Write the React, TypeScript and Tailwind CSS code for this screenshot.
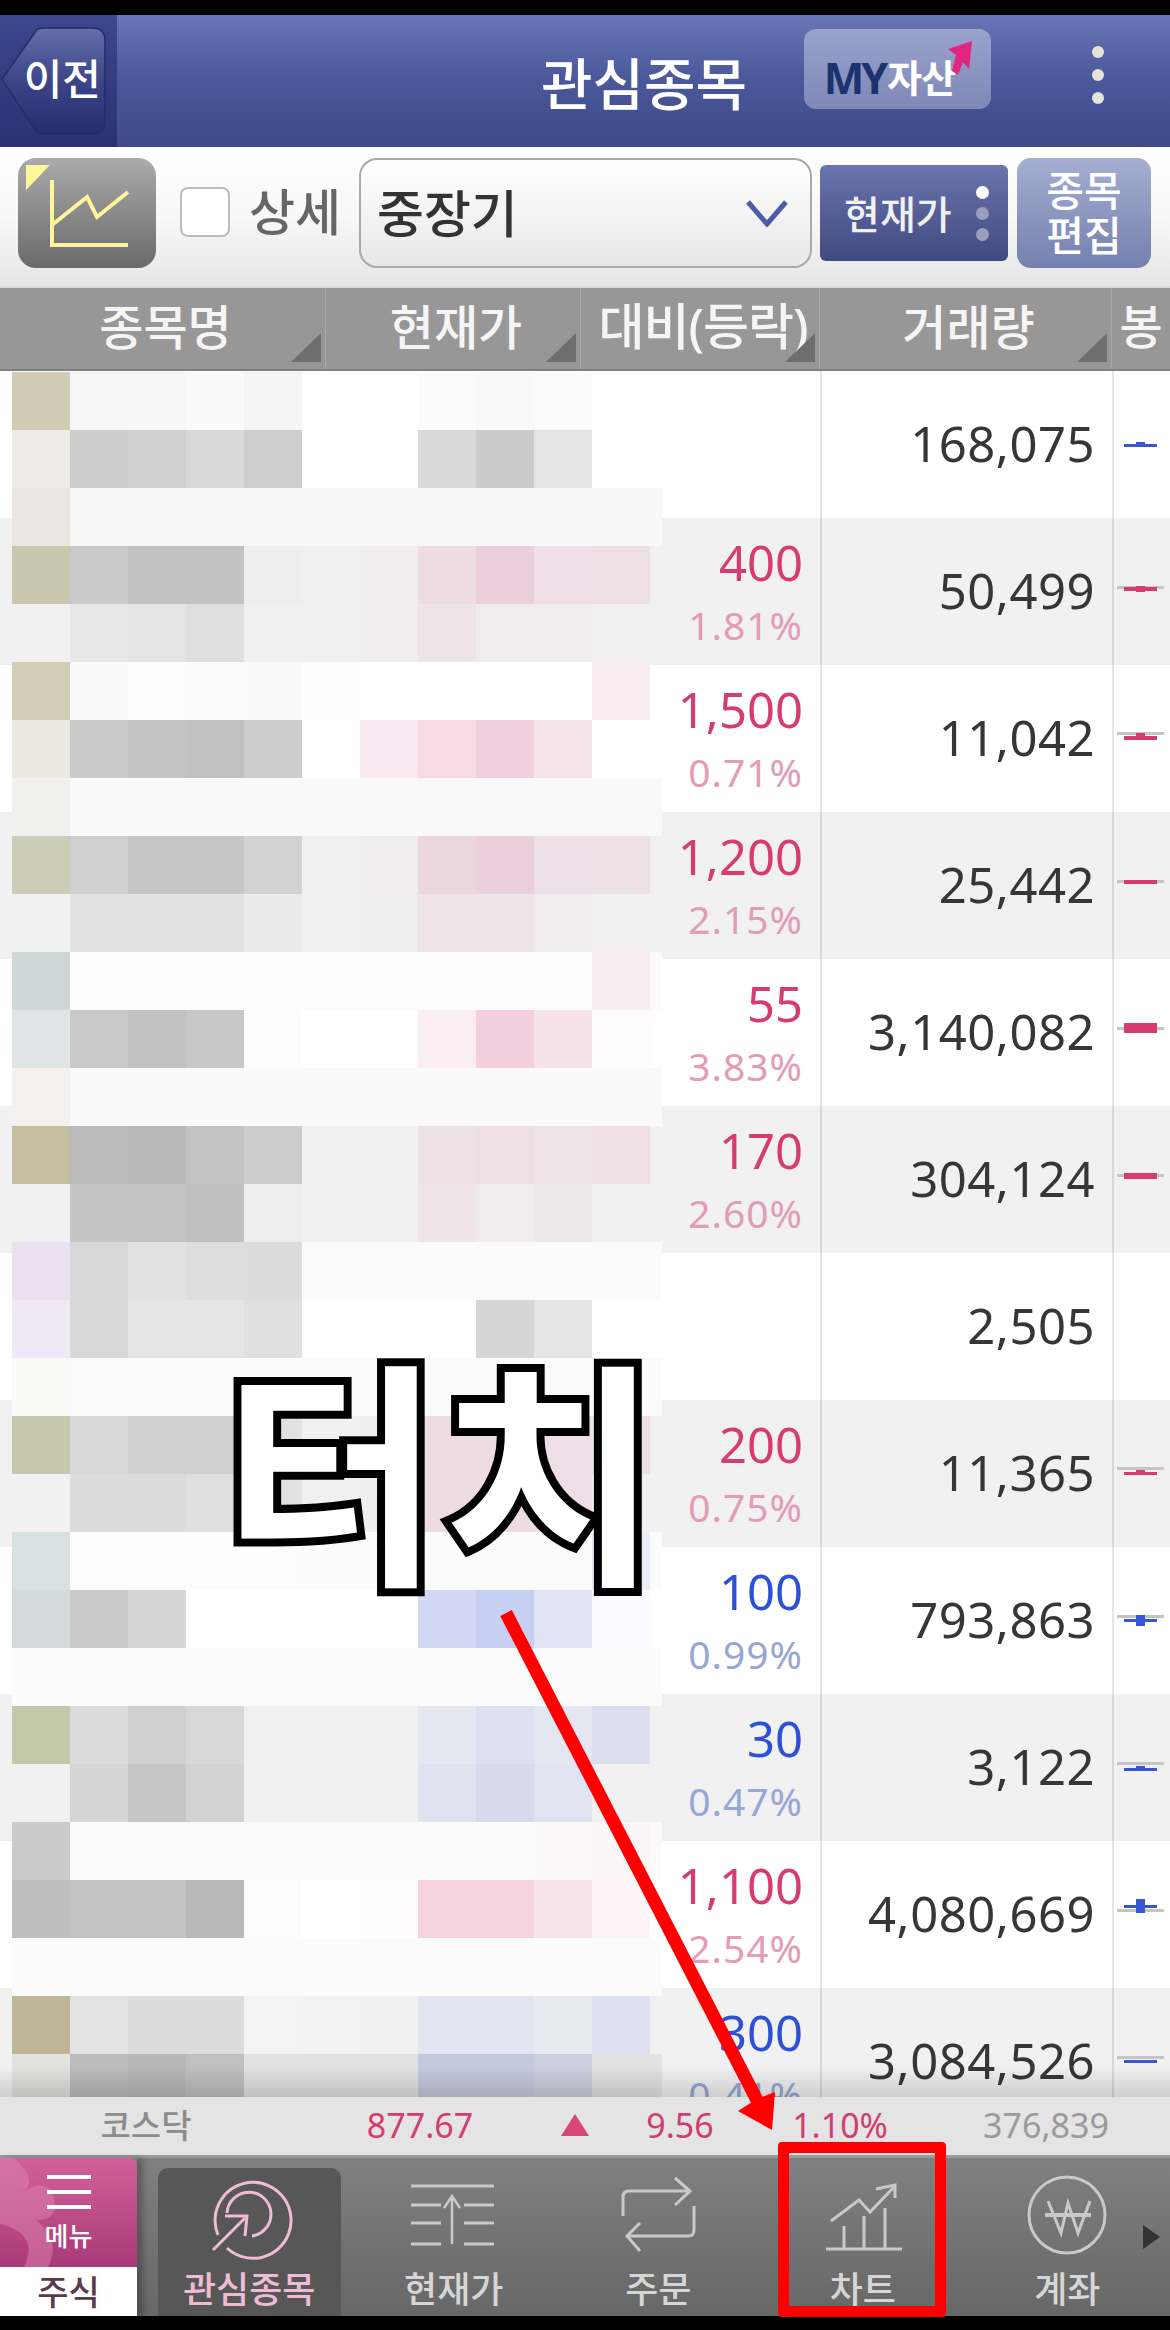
import { ReactNode } from 'react';

// pixelated stock names: one row per 58px band of the list, colours read off the reference
const W = 'ffffff';
const band = (first: string, rest: string) => [first, ...Array(11).fill(rest)];
const MOSAIC: string[][] = [
  ['d2ccb6', 'f7f7f7', 'f7f7f7', 'fafafa', 'f5f5f5', W, W, 'fbfbfb', 'f9f9f9', 'fbfbfb'],
  ['efebe5', 'cdcdcd', 'cfcfcf', 'd8d8d8', 'cecece', W, W, 'd9d9d9', 'cbcbcb', 'e4e4e4'],
  band('ebe7e0', 'f8f8f8'),
  ['cbc6b0', 'c9c9c9', 'c2c2c2', 'c2c2c2', 'eeeeee', 'f0f0f0', 'f0eeef', 'eddce2', 'ebcfda', 'eddfe5', 'eee0e5'],
  ['f1f1f1', 'e7e7e7', 'e4e4e4', 'dfdfdf', 'f0f0f0', 'f0f0f0', 'f0eeef', 'efe5e9', 'f0ecee', 'f0ecee', 'f0f0f0'],
  ['d3cdb8', 'fafafa', 'fcfcfc', 'fbfbfb', 'fafafa', 'fdfdfd', W, W, W, W, 'f8ecf0'],
  ['ece9e0', 'cacaca', 'c3c3c3', 'c1c1c1', 'cdcdcd', W, 'f6e8ee', 'f6dbe5', 'f1d1df', 'f5e4ea', W],
  band('f0f1ec', 'f9f9f9'),
  ['cbcdb6', 'cfcfcf', 'c6c6c6', 'c6c6c6', 'd2d2d2', 'f0f0f0', 'f0edef', 'ead7de', 'ebcfda', 'ecdfe5', 'ece0e5'],
  ['f1f1f1', 'e1e1e1', 'e1e1e1', 'e2e2e2', 'ebebeb', 'f1f1f1', 'efefef', 'efe5e9', 'efe5e9', 'efecee', 'f1f1f1'],
  ['cdd8d7', 'fdfdfd', 'fdfdfd', 'fdfdfd', 'fdfdfd', 'fcfcfc', 'fcfcfc', 'fcfcfc', 'fcfcfc', 'fcfcfc', 'f8edf1', 'fbfbfb'],
  ['dfe5e5', 'c9c9c9', 'c2c2c2', 'c8c8c8', 'fcfcfc', W, W, 'fbeef2', 'f3cfdd', 'f6e3e9', 'fffcfd'],
  band('f5f1ee', 'fafafa'),
  ['c6bea1', 'bbbbbb', 'b9b9b9', 'c3c3c3', 'cccccc', 'f1f1f1', 'f1f1f1', 'eee2e6', 'eedfe4', 'eee3e6', 'efe0e5'],
  ['f1f1f1', 'c5c5c5', 'c3c3c3', 'bfbfbf', 'eeeeee', 'f1f1f1', 'f1f1f1', 'f0e5e9', 'f0ebed', 'eee8ea', 'f1f1f1'],
  ['ecdff0', 'd8d8d8', 'e1e1e1', 'dddddd', 'dcdcdc', 'fbfbfb', 'fbfbfb', 'fbfbfb', 'fbfbfb', 'fbfbfb', 'fbfbfb', 'fbfbfb'],
  ['efe8f5', 'd8d8d8', 'e5e5e5', 'e5e5e5', 'e0e0e0', W, W, W, 'd6d6d6', 'e5e5e5'],
  band('fafaf7', 'fbfbfb'),
  ['c6c8ae', 'd8d8d8', 'd0d0d0', 'd0d0d0', 'e2e2e2', 'f0f0f0', 'f0eff0', 'eddde3', 'eddde3', 'eddfe5', 'eee0e5'],
  ['f1f1f1', 'dcdcdc', 'dcdcdc', 'dfdfdf', 'e2e2e2', 'f0f0f0', 'f0eeef', 'eddde3', 'eddde3', 'eddfe5', 'f1f1f1'],
  ['d8e1e2', 'fcfcfc', 'fcfcfc', 'fcfcfc', 'fcfcfc', 'fbfbfb', 'fbfbfb', 'fbfbfb', 'fbfbfb', 'fbfbfb', 'eaecf8', 'fcfcfc'],
  ['d4dcdd', 'cacaca', 'd6d6d6', W, W, W, W, 'd3d9f5', 'c7d0f2', 'e1e4f7', 'fbfbff'],
  band('fbfbfb', 'fbfbfb'),
  ['c4c8ab', 'dbdbdb', 'd0d0d0', 'd8d8d8', 'f0f0f0', 'f1f1f1', 'f1f1f1', 'e5e8f1', 'dde0ee', 'e4e7f0', 'dcdfed'],
  ['f1f1f1', 'd5d5d5', 'c7c7c7', 'd2d2d2', 'f1f1f1', 'f1f1f1', 'f1f1f1', 'dfe3f0', 'd6dbed', 'e0e4f0', 'f1f1f1'],
  ['cbcbcb', 'fbfbfb', 'fbfbfb', 'fbfbfb', 'fbfbfb', 'fbfbfb', 'fbfbfb', 'fbfbfb', 'fbfbfb', 'fbf9f9', 'fbf7f8', 'fbfbfb'],
  ['bebebe', 'c3c3c3', 'c3c3c3', 'b9b9b9', 'fcfcfc', W, 'fffdfe', 'f4d3de', 'f4d3de', 'f6e4ea', 'fff4f7'],
  band('fbfbfb', 'fbfbfb'),
  ['bfb698', 'e3e3e3', 'dcdcdc', 'dcdcdc', 'f3f3f3', 'f2f2f2', 'f1f1f1', 'e2e5f0', 'e2e5f0', 'e8e9f1', 'dde1f0'],
  ['e2e2df', 'bcbcbc', 'b8b8b8', 'c0c0c0', 'e2e2e2', 'e2e2e2', 'e2e2e2', 'c4cade', 'c4cade', 'ccd0de', 'e2e2e2', 'e2e2e2'],
];

interface Candle {
  gray?: number; // y of the grey reference line
  y: number;
  h: number;
  box?: [number, number]; // top and height of the small body
  blue?: boolean;
}

interface Row {
  change?: string;
  pct?: string;
  up?: boolean;
  volume: string;
  candle?: Candle;
}

const ROWS: Row[] = [
  { volume: '168,075', candle: { y: 73, h: 3, box: [71, 3], blue: true } },
  { change: '400', pct: '1.81%', up: true, volume: '50,499', candle: { gray: 68, y: 69, h: 4, box: [68, 6] } },
  { change: '1,500', pct: '0.71%', up: true, volume: '11,042', candle: { gray: 67, y: 71, h: 4, box: [68, 6] } },
  { change: '1,200', pct: '2.15%', up: true, volume: '25,442', candle: { gray: 68, y: 68, h: 4 } },
  { change: '55', pct: '3.83%', up: true, volume: '3,140,082', candle: { gray: 68, y: 64, h: 10 } },
  { change: '170', pct: '2.60%', up: true, volume: '304,124', candle: { gray: 68, y: 67, h: 6 } },
  { volume: '2,505' },
  { change: '200', pct: '0.75%', up: true, volume: '11,365', candle: { gray: 67, y: 72, h: 3, box: [70, 5] } },
  { change: '100', pct: '0.99%', volume: '793,863', candle: { gray: 68, y: 72, h: 3, box: [68, 11], blue: true } },
  { change: '30', pct: '0.47%', volume: '3,122', candle: { gray: 68, y: 74, h: 3, box: [72, 5], blue: true } },
  { change: '1,100', pct: '2.54%', up: true, volume: '4,080,669', candle: { gray: 68, y: 64, h: 3, box: [58, 14], blue: true } },
  { change: '300', pct: '0.41%', volume: '3,084,526', candle: { gray: 68, y: 72, h: 3, blue: true } },
];

function CandleMark({ candle }: { candle: Candle }) {
  const color = candle.blue ? '#3557d6' : '#d63c72';
  return (
    <svg width="56" height="147" viewBox="0 0 56 147">
      {candle.gray !== undefined && <rect x="3" y={candle.gray} width="47" height="3" fill="#c4c4c4" />}
      <rect x="10" y={candle.y} width="33" height={candle.h} fill={color} />
      {candle.box && <rect x="22" y={candle.box[0]} width="9" height={candle.box[1]} fill={color} />}
    </svg>
  );
}

function StockRow({ row, index }: { row: Row; index: number }) {
  return (
    <div className={`flex h-[147px] shrink-0 ${index % 2 ? 'bg-[#f1f1f1]' : 'bg-white'}`}>
      <div className="flex w-[820px] flex-col items-end pr-[17px] pt-[19px]">
        {row.change && (
          <>
            <span className={`h-[50px] text-[49px] leading-[50px] ${row.up ? 'text-[#d63c72]' : 'text-[#2c50d6]'}`}>{row.change}</span>
            <span className={`mt-[18px] h-[40px] text-[39px] leading-[40px] tracking-[1px] ${row.up ? 'text-[#e39bb7]' : 'text-[#96a6d6]'}`}>{row.pct}</span>
          </>
        )}
      </div>
      <div className="flex w-[292px] items-center justify-end border-l-2 border-black/10 pb-[2px] pr-[17px] text-[49px] leading-none tracking-[0.5px] text-[#363636]">
        {row.volume}
      </div>
      <div className="w-[58px] border-l-2 border-black/10">
        {row.candle && <CandleMark candle={row.candle} />}
      </div>
    </div>
  );
}

function SortCorner() {
  return (
    <svg className="absolute bottom-[7px] right-[4px]" width="30" height="29" viewBox="0 0 30 29">
      <path d="M30 0V29H0Z" fill="#6e6e6e" />
    </svg>
  );
}

function HeadCell({ label, width, size }: { label: string; width: string; size: string }) {
  return (
    <div className={`relative flex items-center justify-center border-r border-[#a9a9a9] pb-[4px] pl-[6px] font-medium text-[#f5f5f5] ${width} ${size}`}>
      {label}
      <SortCorner />
    </div>
  );
}

function BackButton() {
  return (
    <div className="relative flex h-[132px] w-[117px] shrink-0 items-center justify-end bg-gradient-to-b from-[#3d478e] to-[#2a3274] pb-[4px] pr-[16px]">
      <svg className="absolute left-0 top-0" width="117" height="132" viewBox="0 0 117 132">
        <defs>
          <linearGradient id="backFill" x1="0" y1="0" x2="0" y2="1">
            <stop offset="0" stopColor="#656fa8" />
            <stop offset="0.5" stopColor="#3b4588" />
            <stop offset="1" stopColor="#252d6f" />
          </linearGradient>
        </defs>
        <path d="M2 64 L36 16 Q38 13 44 13 H92 Q105 13 105 26 V106 Q105 119 92 119 H44 Q38 119 35 115 Z" fill="url(#backFill)" stroke="#262d63" strokeWidth="1.5" />
      </svg>
      <span className="relative text-[42px] font-medium leading-none text-white">이전</span>
    </div>
  );
}

function TopBar() {
  return (
    <div className="flex h-[132px] shrink-0 items-start bg-gradient-to-b from-[#6875b6] via-[#4a5799] to-[#3e4a88]">
      <BackButton />
      <span className="ml-[424px] mt-[36px] w-[206px] whitespace-nowrap text-[56px] font-medium leading-[64px] text-white">관심종목</span>
      <div className="relative ml-[57px] mt-[14px] flex h-[80px] w-[187px] items-center justify-center rounded-[12px] bg-gradient-to-b from-[#99a3cd] to-[#7f88b6] pr-[16px] pt-[16px]">
        <span className="text-[43px] font-bold leading-none tracking-[-3px] text-[#1c3370]">MY</span>
        <span className="ml-[2px] text-[38px] font-bold leading-none tracking-[-1px] text-white">자산</span>
        <svg className="absolute left-[141px] top-[10px]" width="30" height="42" viewBox="0 0 30 42">
          <path d="M27 2 L24 30 L18 23 L13 36 L7 32 L11 16 L3 10 Z" fill="#e0277f" />
        </svg>
      </div>
      <div className="ml-[101px] mt-[31px] flex flex-col gap-[11px]">
        <span className="block h-[12px] w-[12px] rounded-full bg-[#e6e3d8]" />
        <span className="block h-[12px] w-[12px] rounded-full bg-[#e6e3d8]" />
        <span className="block h-[12px] w-[12px] rounded-full bg-[#e6e3d8]" />
      </div>
    </div>
  );
}

function Toolbar() {
  return (
    <div className="flex h-[141px] shrink-0 items-start border-b-2 border-[#d8d8d8] bg-gradient-to-b from-white via-[#f8f8f8] to-[#e6e6e6] pl-[18px] pt-[11px]">
      <div className="h-[110px] w-[138px] rounded-[18px] bg-gradient-to-b from-[#ababab] to-[#6a6a6a]">
        <svg width="138" height="110" viewBox="0 0 138 110" fill="none" stroke="#fff59a" strokeWidth="4">
          <path d="M8 7 H32 L8 32 Z" fill="#fff59a" stroke="none" />
          <path d="M34 22 V87 H110" />
          <path d="M34 67 L69 39 L79 59 L110 34" />
        </svg>
      </div>
      <div className="ml-[24px] mt-[29px] h-[50px] w-[50px] rounded-[8px] border-2 border-[#bdbdbd] bg-white" />
      <span className="ml-[19px] mt-[24px] w-[92px] whitespace-nowrap text-[50px] font-medium leading-[60px] text-[#666666]">상세</span>
      <div className="ml-[18px] flex h-[110px] w-[453px] items-center justify-between rounded-[18px] border-2 border-[#aaaaaa] bg-gradient-to-b from-white to-[#e8e8e8] pl-[16px] pr-[22px]">
        <span className="text-[51px] font-medium leading-none text-[#333333]">중장기</span>
        <svg width="42" height="28" viewBox="0 0 42 28" fill="none" stroke="#4d5ca8" strokeWidth="5">
          <path d="M2 3 L21 25 L40 3" />
        </svg>
      </div>
      <div className="ml-[8px] mt-[7px] flex h-[96px] w-[188px] items-center rounded-[6px] bg-gradient-to-b from-[#6b75ae] to-[#414a80] pl-[24px]">
        <span className="text-[39px] font-medium leading-none text-[#f0f0f0]">현재가</span>
        <div className="ml-[24px] flex flex-col gap-[8px]">
          <span className="block h-[13px] w-[13px] rounded-full bg-white" />
          <span className="block h-[13px] w-[13px] rounded-full bg-[#9a9fc0]" />
          <span className="block h-[13px] w-[13px] rounded-full bg-[#9a9fc0]" />
        </div>
      </div>
      <div className="ml-[9px] flex h-[110px] w-[134px] flex-col items-center justify-center rounded-[14px] bg-gradient-to-b from-[#a6afd2] to-[#7480ae] text-[41px] font-medium leading-[45px] text-white">
        <span>종목</span>
        <span>편집</span>
      </div>
    </div>
  );
}

function TableHead() {
  return (
    <div className="flex h-[83px] shrink-0 border-b-2 border-[#808080] bg-[#979797]">
      <HeadCell label="종목명" width="w-[326px]" size="text-[48px]" />
      <HeadCell label="현재가" width="w-[255px]" size="text-[48px]" />
      <HeadCell label="대비(등락)" width="w-[239px]" size="text-[50px] tracking-[-1px] whitespace-nowrap" />
      <HeadCell label="거래량" width="w-[292px]" size="text-[48px]" />
      <div className="flex flex-1 items-center justify-center pb-[4px] text-[47px] font-medium text-[#f5f5f5]">봉</div>
    </div>
  );
}

function Mosaic() {
  return (
    <div className="absolute left-[12px] top-[1px] grid h-[1731px] grid-cols-[repeat(11,58px)_12px] auto-rows-[58px] overflow-hidden">
      {MOSAIC.flatMap((cells, r) =>
        Array.from({ length: 12 }, (_, c) => (
          <div key={`${r}-${c}`} style={{ backgroundColor: cells[c] ? `#${cells[c]}` : 'transparent' }} />
        )),
      )}
    </div>
  );
}

function StockList() {
  return (
    <div className="relative flex min-h-0 flex-1 flex-col overflow-hidden">
      {ROWS.map((row, i) => (
        <StockRow key={row.volume} row={row} index={i} />
      ))}
      <Mosaic />
      <div className="absolute inset-x-0 bottom-0 h-[31px] bg-gradient-to-b from-transparent to-black/15" />
    </div>
  );
}

function IndexBar() {
  return (
    <div className="flex h-[58px] shrink-0 items-center bg-[#e4e4e4] pb-[2px] text-center text-[34px] leading-none">
      <span className="w-[292px] text-[33px] font-medium text-[#8c8c8c]">코스닥</span>
      <span className="w-[256px] text-[#d23c72]">877.67</span>
      <span className="flex w-[54px] justify-center">
        <svg width="28" height="22" viewBox="0 0 28 22">
          <path d="M14 0 L28 22 H0 Z" fill="#d9447a" />
        </svg>
      </span>
      <span className="w-[156px] text-[#d23c72]">9.56</span>
      <span className="w-[164px] text-[#d23c72]">1.10%</span>
      <span className="w-[248px] text-[#9a9a9a]">376,839</span>
    </div>
  );
}

function NavTab({ label, active, children }: { label: string; active?: boolean; children: ReactNode }) {
  return (
    <div className="relative flex w-[204.5px] flex-col items-center pt-[7px]">
      {active && <div className="absolute inset-x-[11px] bottom-0 top-[10px] rounded-t-[10px] bg-[#575757]" />}
      <svg className="relative" width="100" height="100" viewBox="0 0 100 100" fill="none" stroke={active ? '#efbcd6' : '#c9c9c9'} strokeWidth="3">
        {children}
      </svg>
      <span className={`relative mt-[3px] whitespace-nowrap text-[36px] font-medium leading-[44px] ${active ? 'text-[#efbcd6]' : 'text-[#d6d6d6]'}`}>{label}</span>
    </div>
  );
}

function BottomNav() {
  return (
    <div className="relative flex h-[161px] shrink-0 border-t-[3px] border-[#9a9a9a] bg-gradient-to-b from-[#808080] to-[#676767]">
      <div className="flex w-[137px] shrink-0 flex-col shadow-[6px_0_6px_rgba(0,0,0,0.25)]">
        <div className="relative flex h-[109px] flex-col items-center overflow-hidden rounded-tr-[8px] bg-gradient-to-b from-[#d2609a] to-[#a93a78] pt-[17px]">
          <svg className="absolute left-0 top-0" width="137" height="109" viewBox="0 0 137 109">
            <path d="M0 0 H14 Q40 24 22 34 Q50 18 54 42 Q58 62 36 62 Q62 82 48 109 H24 Q40 76 0 66 Z" fill="#de86b2" opacity="0.5" />
          </svg>
          <span className="relative block h-[4px] w-[44px] bg-white" />
          <span className="relative mt-[11px] block h-[4px] w-[44px] bg-white" />
          <span className="relative mt-[11px] block h-[4px] w-[44px] bg-white" />
          <span className="relative mt-[10px] text-[26px] font-medium leading-[34px] text-white">메뉴</span>
        </div>
        <div className="flex flex-1 items-center justify-center bg-white text-[34px] font-medium leading-none text-[#5c3a4c]">주식</div>
      </div>
      <div className="ml-[10px] flex flex-1">
        <NavTab label="관심종목" active>
          <path d="M19 70 A38 38 0 1 1 28 83" />
          <path d="M28 48 A22 22 0 1 1 53 71" />
          <path d="M14 85 L46 53" />
          <path d="M26 51 H48 L46 71" />
        </NavTab>
        <NavTab label="현재가">
          <path d="M7 21 H90 M7 40 H37 M60 40 H90 M7 58 H37 M60 58 H90 M7 79 H37 M60 79 H90" />
          <path d="M48 79 V31 M40 43 L48 31 L56 43" strokeWidth="2.5" />
        </NavTab>
        <NavTab label="주문">
          <path d="M15 51 V32 Q15 26 21 26 H82" />
          <path d="M67 13 L82 26 L67 40" />
          <path d="M86 41 V65 Q86 71 80 71 H19" />
          <path d="M32 58 L19 71 L32 86" />
        </NavTab>
        <NavTab label="차트">
          <path d="M13 84 H89" />
          <path d="M31 61 V84 M51 51 V84 M72 43 V84" />
          <path d="M18 56 L46 35 L57 47 L82 21" />
          <path d="M63 24 L82 20 V33" />
        </NavTab>
        <NavTab label="계좌">
          <circle cx="50" cy="50" r="38" />
          <path d="M31 36 L44 68 L51 38 L61 68 L73 36" />
          <path d="M28 50 H74" strokeWidth="4" />
        </NavTab>
      </div>
      <svg className="absolute left-[1143px] top-[67px]" width="17" height="24" viewBox="0 0 17 24">
        <path d="M0 0 L17 12 L0 24 Z" fill="#333333" />
      </svg>
    </div>
  );
}

export default function App() {
  return (
    <div className="relative flex h-[2330px] w-[1170px] flex-col overflow-hidden bg-black pb-[14px] pt-[15px] font-['Noto_Sans','Noto_Sans_CJK_KR',sans-serif]">
      <TopBar />
      <Toolbar />
      <TableHead />
      <StockList />
      <IndexBar />
      <BottomNav />

      {/* annotations drawn over the screenshot */}
      <span className="absolute left-[222px] top-[1340px] text-[238px] font-bold leading-[268px] text-white [-webkit-text-stroke:16px_black] [paint-order:stroke_fill]">터치</span>
      <svg className="absolute left-0 top-0" width="1170" height="2330" viewBox="0 0 1170 2330">
        <path d="M506 1613 L760 2106" stroke="#ff0000" strokeWidth="13" fill="none" />
        <path d="M772 2130 L738 2111 L757 2099 L775 2092 Z" fill="#ff0000" />
      </svg>
      <div className="absolute left-[778px] top-[2142px] h-[175px] w-[168px] rounded-[4px] border-[11px] border-[#ff0000]" />
    </div>
  );
}
